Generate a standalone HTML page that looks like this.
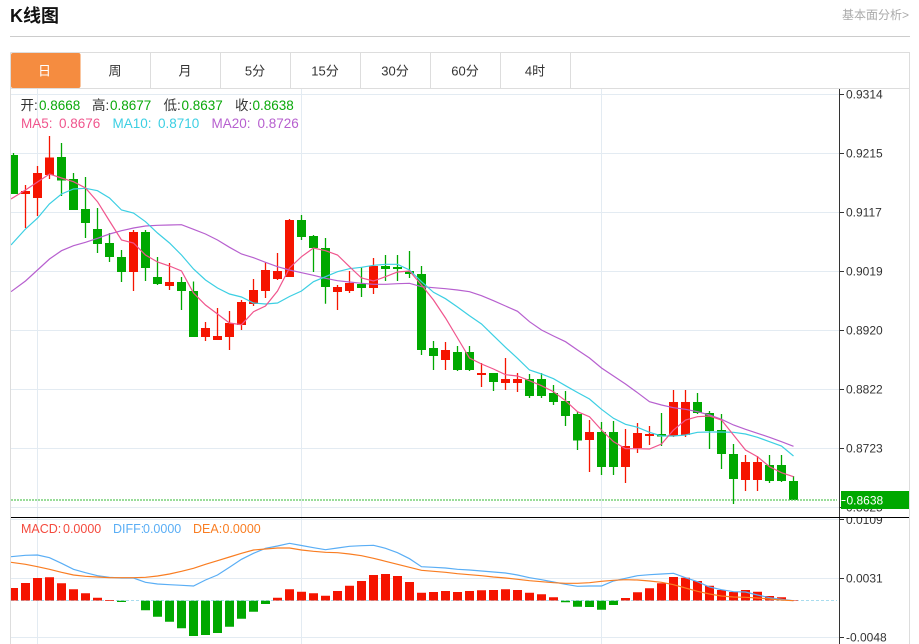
<!DOCTYPE html>
<html><head><meta charset="utf-8"><style>
html,body{margin:0;padding:0;background:#fff;width:919px;height:644px;overflow:hidden}
svg{display:block}
text{font-family:"Liberation Sans","Noto Sans CJK SC",sans-serif}
</style></head><body>
<svg xmlns="http://www.w3.org/2000/svg" width="919" height="644" viewBox="0 0 919 644">
<defs>
<clipPath id="c"><rect x="11" y="89" width="828" height="555"/></clipPath>
<clipPath id="top"><rect x="840" y="89" width="70" height="428"/></clipPath>
<clipPath id="bot"><rect x="840" y="518" width="70" height="126"/></clipPath>
</defs>
<text x="10" y="22" font-size="18" font-weight="bold" fill="#111">K线图</text>
<text x="842" y="19" font-size="12" fill="#aaa">基本面分析&gt;</text>
<path d="M10 36.5H910" stroke="#ccc" fill="none"/>
<path d="M10.5 52.5H909.5V644M10.5 52.5V644M10.5 88.5H909.5M150.5 52.5V88.5M220.5 52.5V88.5M290.5 52.5V88.5M360.5 52.5V88.5M430.5 52.5V88.5M500.5 52.5V88.5M570.5 52.5V88.5" stroke="#ddd" fill="none"/>
<rect x="11" y="53" width="69.5" height="35" rx="2" fill="#f58c40"/>
<g font-size="13" fill="#333" text-anchor="middle">
<text x="44.5" y="75.5" fill="#fff">日</text>
<text x="115" y="75.5">周</text>
<text x="185" y="75.5">月</text>
<text x="255" y="75.5">5分</text>
<text x="325" y="75.5">15分</text>
<text x="395" y="75.5">30分</text>
<text x="465" y="75.5">60分</text>
<text x="535" y="75.5">4时</text>
</g>
<path d="M11 94.5H839M11 153.5H839M11 212.5H839M11 271.5H839M11 330.5H839M11 389.5H839M11 448.5H839M11 507.5H839M11 519.5H839M11 578.5H839M11 637.5H839M37.5 89V644M301.5 89V644M601.5 89V644" stroke="#e3ebf2" fill="none"/>
<g clip-path="url(#c)" fill="none">
<path stroke="#00a800" stroke-width="1.3" d="M13.5 153V194M61.5 143V196M73.5 173V210M85.5 177V238M97.5 208V253M109.5 233V262M121.5 250V282M145.5 230V281M157.5 257V285M181.5 277V310M193.5 281.5V337M301.5 215V240M313.5 235V272M325.5 238V303.7M361.5 267V297M385.5 255V281M397.5 255V281M409.5 251V278M421.5 266V355M433.5 341V370M457.5 346V371M469.5 346V371M493.5 373V391M529.5 374V398M541.5 373V398M553.5 385V405M565.5 391V426M577.5 412V450M601.5 422V475M613.5 421V475M661.5 413V446M697.5 393V414M709.5 411V449M721.5 414V469M733.5 444V504M769.5 455V483M781.5 455V482M793.5 476V500"/>
<path stroke="#00a800" stroke-width="9" d="M13.5 155V194M61.5 157V180.5M73.5 179V210M85.5 209V223M97.5 229V244M109.5 243V257M121.5 257V272M145.5 232V268M157.5 277V284M181.5 282V291M193.5 291V337M301.5 220V237M313.5 236V248M325.5 248V287M361.5 284V288M385.5 266V269M397.5 267V269M409.5 271V274M421.5 274V350M433.5 348V356M457.5 352V370M469.5 352V370M493.5 373V382M529.5 379V396M541.5 379V396M553.5 393V402M565.5 401V416M577.5 414V440.5M601.5 432V467M613.5 432V467M661.5 434V436.5M697.5 402V413M709.5 413V431M721.5 430V454M733.5 454V479M769.5 465V481M781.5 465V481M793.5 481V500"/>
<path stroke="#f51400" stroke-width="1.3" d="M25.5 185V228M37.5 166V216M49.5 136V179M133.5 230V291M169.5 263V290M205.5 322V341M217.5 308V340M229.5 311V350M241.5 300V330M253.5 279V306M265.5 262V298M277.5 253V280M289.5 219V277M337.5 285V310M349.5 271V293M373.5 258V294M445.5 342V370M481.5 363V387M505.5 358V390M517.5 373V392M589.5 420V472M625.5 429V483M637.5 423V453M649.5 426V445M673.5 390V437M685.5 390V437M745.5 455V491M757.5 456V491"/>
<path stroke="#f51400" stroke-width="9" d="M25.5 191V194M37.5 173V198M49.5 157.5V175M133.5 232V272M169.5 282V286M205.5 328V337M217.5 336V340M229.5 323V337M241.5 302V325M253.5 290V304M265.5 270V291M277.5 271V279M289.5 220V277M337.5 287V292M349.5 283V291M373.5 266V288M445.5 350V360M481.5 373V375M505.5 379V383M517.5 379V383M589.5 432V440M625.5 446V467M637.5 433V448M649.5 434V436M673.5 402V436M685.5 402V435M745.5 462V480M757.5 462V480"/>
<polyline stroke="#b760cf" stroke-width="1.2" points="11,291.7 25.5,281 37.5,270 49.5,259 61.5,250.7 73.5,245.7 85.5,242.3 97.5,238.3 109.5,234 121.5,230.7 133.5,228 145.5,226 157.5,225.3 169.5,225 181.5,224.7 193.5,229.3 205.5,234 217.5,240 229.5,247.3 241.5,254 253.5,257.7 265.5,262.3 277.5,266.7 289.5,270 301.5,272.7 313.5,275.3 325.5,278.3 337.5,280.7 349.5,282 361.5,283.3 373.5,284.3 385.5,284.3 397.5,283.7 409.5,283.3 421.5,286.7 433.5,287.7 445.5,288.7 457.5,290 469.5,291.7 481.5,295.7 493.5,300.7 505.5,306 517.5,311.3 529.5,321.7 541.5,330 553.5,336 565.5,341.7 577.5,350 589.5,358 601.5,368 613.5,376 625.5,384 637.5,392.7 649.5,401.7 661.5,405 673.5,407.7 685.5,409.3 697.5,411.7 709.5,415 721.5,419.3 733.5,425 745.5,429.3 757.5,433.3 769.5,437.3 781.5,441.7 793.5,446.3"/>
<polyline stroke="#3ccfe3" stroke-width="1.2" points="11,245 25.5,229 37.7,218 49.3,204 61.5,194 73.5,189 85.5,188.3 97.5,190.7 109.5,198 121.5,210 133.5,213 145.5,221.7 157.5,233 169.5,243 181.5,255 193.5,269 205.5,280 217.5,288 229.5,294 241.5,297 253.5,303 265.5,304 277.5,303 289.5,296.5 301.5,291 313.5,281.7 325.5,276.7 337.5,271.7 349.5,268.7 361.5,267.3 373.5,265.3 385.5,264.3 397.5,264.3 409.5,270 421.5,281.7 433.5,292.3 445.5,298.7 457.5,307 469.5,315.7 481.5,324 493.5,335.7 505.5,347.3 517.5,358.3 529.5,370 541.5,374 553.5,378.7 565.5,385.7 577.5,392.5 589.5,399 601.5,409.3 613.5,418.3 625.5,424.3 637.5,427.3 649.5,432.3 661.5,436 673.5,436 685.5,435 697.5,432.3 709.5,432 721.5,432 733.5,432.3 745.5,434 757.5,437.3 769.5,441.7 781.5,446 793.5,456"/>
<polyline stroke="#f0558d" stroke-width="1.2" points="11,199 25.5,190 37.5,182 49.5,174 61.5,178 73.5,181.7 85.5,188 97.5,201.7 109.5,221 121.5,240 133.5,243 145.5,255 157.5,262 169.5,266 181.5,271 193.5,293 205.5,305 217.5,314 229.5,323 241.5,324.7 253.5,311.7 265.5,306 277.5,291 289.5,268 301.5,256.7 313.5,248 325.5,250.7 337.5,255 349.5,266.7 361.5,278 373.5,281 385.5,276.7 397.5,272 409.5,271 421.5,285 433.5,300 445.5,318 457.5,338 469.5,358 481.5,364 493.5,369 505.5,374.7 517.5,376 529.5,380.7 541.5,385.7 553.5,391.7 565.5,400.7 577.5,411.7 589.5,416.7 601.5,430 613.5,441.7 625.5,448.7 637.5,448.7 649.5,449 661.5,444 673.5,430 685.5,420 697.5,416.7 709.5,416 721.5,420 733.5,435 745.5,450 757.5,456.7 769.5,466.7 781.5,472.7 793.5,476.7"/>
<path d="M11 500H837" stroke="#5cc75c" stroke-width="1.3" stroke-dasharray="2 1"/>
<path d="M11 600.5H837" stroke="#a9dcee" stroke-dasharray="3 2"/>
<path stroke="#f51400" stroke-width="9" d="M13.5 588V600.5M25.5 583V600.5M37.5 578V600.5M49.5 577.3V600.5M61.5 583.3V600.5M73.5 589.3V600.5M85.5 593.3V600.5M97.5 597.7V600.5M109.5 600V600.7M277.5 597.7V600.5M289.5 589.3V600.5M301.5 591.7V600.5M313.5 593.3V600.5M325.5 595.7V600.5M337.5 591V600.5M349.5 585.7V600.5M361.5 581V600.5M373.5 575V600.5M385.5 574V600.5M397.5 576V600.5M409.5 582V600.5M421.5 592.7V600.5M433.5 592V600.5M445.5 591V600.5M457.5 592V600.5M469.5 591V600.5M481.5 590.3V600.5M493.5 590V600.5M505.5 589.3V600.5M517.5 590V600.5M529.5 592.7V600.5M541.5 594.3V600.5M553.5 597.3V600.5M625.5 598V600.5M637.5 592.3V600.5M649.5 588.3V600.5M661.5 583.3V600.5M673.5 577V600.5M685.5 577.7V600.5M697.5 581V600.5M709.5 585.7V600.5M721.5 590V600.5M733.5 592V600.5M745.5 590V600.5M757.5 591.7V600.5M769.5 596V600.5M781.5 597.3V600.5M793.5 600V600.5"/>
<path stroke="#00a800" stroke-width="9" d="M121.5 600.7V602M145.5 600.7V610.3M157.5 600.7V616.7M169.5 600.7V621.7M181.5 600.7V628.3M193.5 600.7V636M205.5 600.7V635M217.5 600.7V633M229.5 600.7V626.7M241.5 600.7V618.7M253.5 600.7V611.7M265.5 600.7V604M565.5 600.7V602.3M577.5 600.7V606.7M589.5 600.7V607M601.5 600.7V609.7M613.5 600.7V605"/>
<polyline stroke="#5aaef5" stroke-width="1.2" points="11,556.7 25.5,555.3 37.5,555 49.5,557.7 61.5,563.3 73.5,569.3 85.5,572.7 97.5,575.7 109.5,577.3 121.5,578 133.5,578 145.5,582.3 157.5,584 169.5,584.7 181.5,585.3 193.5,586 205.5,580 217.5,575 229.5,567.3 241.5,559.3 253.5,553.3 265.5,548.3 277.5,546 289.5,543.3 301.5,545.5 313.5,547.7 325.5,549.7 337.5,548 349.5,546.3 361.5,545.7 373.5,545.3 385.5,548.3 397.5,552.7 409.5,558.7 421.5,566.7 433.5,567.3 445.5,568 457.5,569.3 469.5,570 481.5,571 493.5,572 505.5,573 517.5,575 529.5,577.7 541.5,579.7 553.5,582 565.5,584.3 577.5,586.3 589.5,586 601.5,586 613.5,581 625.5,578.3 637.5,575.7 649.5,574.7 661.5,574 673.5,573.3 685.5,577.7 697.5,581.7 709.5,587 721.5,589.7 733.5,591.7 745.5,592 757.5,595 769.5,597.7 781.5,599.3 793.5,600.7"/>
<polyline stroke="#f97d22" stroke-width="1.2" points="11,562.3 25.5,564.3 37.5,566.7 49.5,569.3 61.5,572.3 73.5,575 85.5,576.3 97.5,577 109.5,577.7 121.5,577.7 133.5,577.7 145.5,577.3 157.5,576 169.5,574 181.5,571.3 193.5,568.3 205.5,564.3 217.5,560.7 229.5,557 241.5,553.3 253.5,550 265.5,549 277.5,548 289.5,548 301.5,550 313.5,551.3 325.5,552.3 337.5,552.7 349.5,554 361.5,555.7 373.5,558.3 385.5,561.3 397.5,564.3 409.5,567.3 421.5,570.3 433.5,571.3 445.5,572.3 457.5,573.7 469.5,574.7 481.5,575.7 493.5,577 505.5,578 517.5,579.3 529.5,580.7 541.5,581.7 553.5,582.7 565.5,583.3 577.5,583.3 589.5,582.7 601.5,581.3 613.5,580.3 625.5,579.7 637.5,580 649.5,581 661.5,582.3 673.5,584.7 685.5,588 697.5,591.3 709.5,594 721.5,596 733.5,597 745.5,597.3 757.5,598 769.5,599 781.5,600 793.5,600.7"/>
</g>
<path d="M839.5 89V644" stroke="#333" fill="none"/>
<path d="M840 94.5H844M840 153.5H844M840 212.5H844M840 271.5H844M840 330.5H844M840 389.5H844M840 448.5H844M840 507.5H844M840 519.5H844M840 578.5H844M840 637.5H844" stroke="#333" fill="none"/>
<g font-size="12" fill="#333">
<text x="846" y="98.5">0.9314</text>
<text x="846" y="157.5">0.9215</text>
<text x="846" y="216.5">0.9117</text>
<text x="846" y="275.5">0.9019</text>
<text x="846" y="334.5">0.8920</text>
<text x="846" y="393.5">0.8822</text>
<text x="846" y="452.5">0.8723</text>
<text x="846" y="511.5" clip-path="url(#top)">0.8625</text>
<text x="846" y="524" clip-path="url(#bot)">0.0109</text>
<text x="846" y="582.5">0.0031</text>
<text x="846" y="641.5">-0.0048</text>
</g>
<rect x="841" y="491" width="68" height="18" fill="#00a800"/>
<path d="M841.5 500.5H845.5" stroke="#fff" fill="none"/>
<text x="846.5" y="504.5" font-size="12" fill="#fff">0.8638</text>
<path d="M11 517.5H909" stroke="#000" fill="none"/>
<g font-size="13.5" fill="#333">
<text x="20.5" y="110">开:</text><text x="39" y="110" fill="#0aa90a">0.8668</text>
<text x="92" y="110">高:</text><text x="110" y="110" fill="#0aa90a">0.8677</text>
<text x="163.5" y="110">低:</text><text x="181.5" y="110" fill="#0aa90a">0.8637</text>
<text x="235" y="110">收:</text><text x="252.5" y="110" fill="#0aa90a">0.8638</text>
<text x="21" y="128" fill="#f0558d">MA5:</text><text x="59" y="128" fill="#f0558d">0.8676</text>
<text x="112.5" y="128" fill="#3ccfe3">MA10:</text><text x="158" y="128" fill="#3ccfe3">0.8710</text>
<text x="211.5" y="128" fill="#b760cf">MA20:</text><text x="257.5" y="128" fill="#b760cf">0.8726</text>
</g>
<g font-size="12.5">
<text x="21" y="533" fill="#f44a3e">MACD:</text><text x="63" y="533" fill="#f44a3e">0.0000</text>
<text x="113" y="533" fill="#5aaef5">DIFF:</text><text x="143" y="533" fill="#5aaef5">0.0000</text>
<text x="193" y="533" fill="#f97d22">DEA:</text><text x="222.5" y="533" fill="#f97d22">0.0000</text>
</g>
</svg>
</body></html>
